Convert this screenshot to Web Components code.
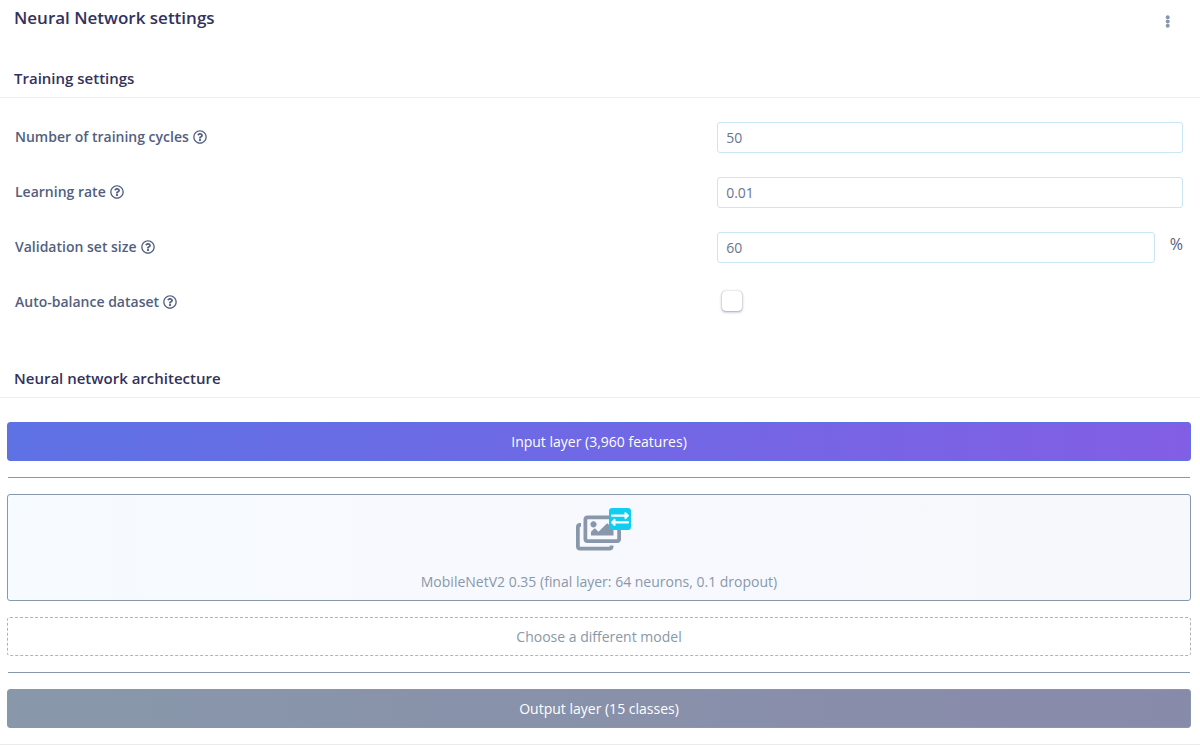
<!DOCTYPE html>
<html lang="en">
<head>
<meta charset="utf-8">
<meta name="viewport" content="width=device-width, initial-scale=1">
<title>Neural Network settings</title>
<style>
  body {
    margin: 0;
    background: #fff;
    color: #525f7f;
    font: 400 14px/21px "Open Sans", "Noto Sans", sans-serif;
  }
</style>
</head>
<body>
<nn-settings></nn-settings>

<template id="tpl-settings">
  <style>
    :host { display: block; }
    header { display: flex; justify-content: space-between; padding: 6px 24px 0 14px; }
    h1 { margin: 0; font-size: 17px; line-height: 24px; font-weight: 600; color: #32325d; }
    .menu { border: 0; background: none; padding: 0; margin-top: 7px; width: 16px; height: 16px; color: #8898aa; cursor: pointer; }
    .menu svg { display: block; }
    .fields { display: grid; gap: 24px; padding: 24px 17px 48px 15px; }
    .stack { display: grid; gap: 16px; padding: 24px 9px 16px 7px; border-bottom: 1px solid #e9ecef; }
    hr { width: calc(100% - 2px); height: 1px; margin: 0 auto; border: 0; background: #8898aa; }
    nn-section-title.first { margin-top: 36px; }
  </style>
  <header>
    <h1>Neural Network settings</h1>
    <button class="menu" type="button" aria-label="More options">
      <svg width="16" height="16" viewBox="0 0 16 16" fill="currentColor"><circle cx="7.700" cy="4.200" r="2"/><circle cx="7.700" cy="8.500" r="2"/><circle cx="7.700" cy="12.800" r="2"/></svg>
    </button>
  </header>
  <nn-section-title class="first">Training settings</nn-section-title>
  <div class="fields">
    <nn-field label="Number of training cycles" value="50"></nn-field>
    <nn-field label="Learning rate" value="0.01"></nn-field>
    <nn-field label="Validation set size" value="60" unit="%"></nn-field>
    <nn-field label="Auto-balance dataset" type="checkbox"></nn-field>
  </div>
  <nn-section-title>Neural network architecture</nn-section-title>
  <div class="stack">
    <nn-layer kind="input">Input layer (3,960 features)</nn-layer>
    <hr>
    <nn-layer kind="model"><nn-transfer-icon slot="icon"></nn-transfer-icon>MobileNetV2 0.35 (final layer: 64 neurons, 0.1 dropout)</nn-layer>
    <nn-layer kind="choose">Choose a different model</nn-layer>
    <hr>
    <nn-layer kind="output">Output layer (15 classes)</nn-layer>
  </div>
</template>

<template id="tpl-title">
  <style>
    :host { display: block; border-bottom: 1px solid #ebedf0; padding: 0 14px 7px; }
    h2 { margin: 0; font-size: 15px; line-height: 24px; font-weight: 600; color: #32325d; }
  </style>
  <h2><slot></slot></h2>
</template>

<template id="tpl-field">
  <style>
    :host { display: grid; grid-template-columns: 7fr 5fr; column-gap: 50px; min-height: 31px; }
    .name { display: flex; align-items: center; gap: 4px; height: 29px; font-weight: 600; }
    .help { display: block; width: 14px; height: 14px; }
    .control { display: flex; gap: 15px; }
    .text { flex: 1; min-width: 0; box-sizing: border-box; height: 31px; padding: 4px 8px; border: 1px solid #cae5f4; border-radius: 3px; background: #fff; color: #6b7590; font: inherit; outline: 0; }
    .unit { font-size: 16px; line-height: 24px; }
    .box { appearance: none; width: 20px; height: 20px; margin: 4px 0 0 5px; border-radius: 4px; background: #fff; box-shadow: 0 0 1px rgba(50, 50, 93, .4), 0 1px 3px rgba(50, 50, 93, .45); }
    .box:checked { background: #5e72e4; }
  </style>
  <div class="name">
    <label for="control"></label>
    <svg class="help" viewBox="0 0 512 512" fill="currentColor" aria-hidden="true"><path d="M256 8C119.043 8 8 119.083 8 256c0 136.997 111.043 248 248 248s248-111.003 248-248C504 119.083 392.957 8 256 8zm0 448c-110.532 0-200-89.431-200-200 0-110.495 89.472-200 200-200 110.491 0 200 89.471 200 200 0 110.53-89.431 200-200 200zm107.244-255.2c0 67.052-72.421 68.084-72.421 92.863V300c0 6.627-5.373 12-12 12h-45.647c-6.627 0-12-5.373-12-12v-8.659c0-35.745 27.1-50.034 47.579-61.516 17.561-9.845 28.324-16.541 28.324-29.579 0-17.246-21.999-28.693-39.784-28.693-23.189 0-33.894 10.977-48.942 29.969-4.057 5.12-11.46 6.071-16.666 2.124l-27.824-21.098c-5.107-3.872-6.251-11.066-2.644-16.363C184.846 131.491 214.94 112 261.794 112c49.071 0 101.45 38.304 101.45 88.8zM298 368c0 23.159-18.841 42-42 42s-42-18.841-42-42 18.841-42 42-42 42 18.841 42 42z"/></svg>
  </div>
  <div class="control"><input id="control"></div>
</template>

<template id="tpl-layer">
  <style>
    :host { display: block; }
    button { display: block; width: 100%; padding: 8px; border: 1px solid #8898aa; border-radius: 3px; font: inherit; color: #8898aa; background: none; cursor: pointer; }
    :host([kind="input"]) button { color: #fff; font-weight: 500; border-color: #5e72e4; background: linear-gradient(87deg, #5e72e4, #825ee4); }
    :host([kind="output"]) button { color: #fff; font-weight: 500; background: linear-gradient(87deg, #8898aa, #888aaa); }
    :host([kind="model"]) button { background: linear-gradient(87deg, #f6fbff, #f8f9fe 40%, #f6f8fc); }
    :host([kind="choose"]) button { border: 1px dashed #b0b3b8; }
  </style>
  <button type="button"><slot name="icon"></slot><slot></slot></button>
</template>

<template id="tpl-transfer">
  <style>
    :host { display: block; position: relative; width: 46px; height: 58px; margin: 0 auto; padding-top: 10px; }
    svg { display: block; }
    .badge { position: absolute; top: 5px; left: 33px; display: grid; place-items: center; width: 22px; height: 22px; border-radius: 3px; background: #11cdef; color: #fff; }
  </style>
  <svg width="45" height="40" viewBox="0 0 576 512" fill="currentColor" aria-hidden="true"><path d="M480 416v16c0 26.510-21.490 48-48 48H48c-26.510 0-48-21.490-48-48V176c0-26.510 21.490-48 48-48h16v48H54a6 6 0 0 0-6 6v244a6 6 0 0 0 6 6h372a6 6 0 0 0 6-6v-10h48zm42-336H150a6 6 0 0 0-6 6v244a6 6 0 0 0 6 6h372a6 6 0 0 0 6-6V86a6 6 0 0 0-6-6zm6-48c26.510 0 48 21.490 48 48v256c0 26.510-21.490 48-48 48H144c-26.510 0-48-21.490-48-48V80c0-26.510 21.490-48 48-48h384zM264 144c0 22.091-17.909 40-40 40s-40-17.909-40-40 17.909-40 40-40 40 17.909 40 40zm-72 96l39.515-39.515c4.686-4.686 12.284-4.686 16.971 0L288 240l103.515-103.515c4.686-4.686 12.284-4.686 16.971 0L480 208v80H192v-48z"/></svg>
  <span class="badge"><svg width="18" height="18" viewBox="0 0 512 512" fill="currentColor" aria-hidden="true"><path d="M0 168v-16c0-13.255 10.745-24 24-24h360V80c0-21.367 25.899-32.042 40.971-16.971l80 80c9.372 9.373 9.372 24.569 0 33.941l-80 80C409.956 271.982 384 261.456 384 240v-48H24c-13.255 0-24-10.745-24-24zm488 152H128v-48c0-21.314-25.862-32.080-40.971-16.971l-80 80c-9.372 9.373-9.372 24.569 0 33.941l80 80C102.057 463.997 128 453.437 128 432v-48h360c13.255 0 24-10.745 24-24v-16c0-13.255-10.745-24-24-24z"/></svg></span>
</template>

<script>
  class TemplateElement extends HTMLElement {
    constructor() {
      super();
      const template = document.getElementById(this.constructor.template);
      this.attachShadow({ mode: "open" }).append(document.importNode(template.content, true));
    }
  }

  class Layer extends TemplateElement { static template = "tpl-layer"; }
  class TransferIcon extends TemplateElement { static template = "tpl-transfer"; }
  class SectionTitle extends TemplateElement { static template = "tpl-title"; }
  class Settings extends TemplateElement { static template = "tpl-settings"; }

  class Field extends TemplateElement {
    static template = "tpl-field";
    connectedCallback() {
      const root = this.shadowRoot;
      root.querySelector("label").textContent = this.getAttribute("label");
      const input = root.querySelector("input");
      const checkbox = this.getAttribute("type") === "checkbox";
      input.type = checkbox ? "checkbox" : "text";
      input.className = checkbox ? "box" : "text";
      if (!checkbox) input.value = this.getAttribute("value") || "";
      if (this.hasAttribute("unit") && !root.querySelector(".unit")) {
        const unit = document.createElement("span");
        unit.className = "unit";
        unit.textContent = this.getAttribute("unit");
        input.after(unit);
      }
    }
  }

  customElements.define("nn-transfer-icon", TransferIcon);
  customElements.define("nn-layer", Layer);
  customElements.define("nn-field", Field);
  customElements.define("nn-section-title", SectionTitle);
  customElements.define("nn-settings", Settings);
</script>
</body>
</html>
